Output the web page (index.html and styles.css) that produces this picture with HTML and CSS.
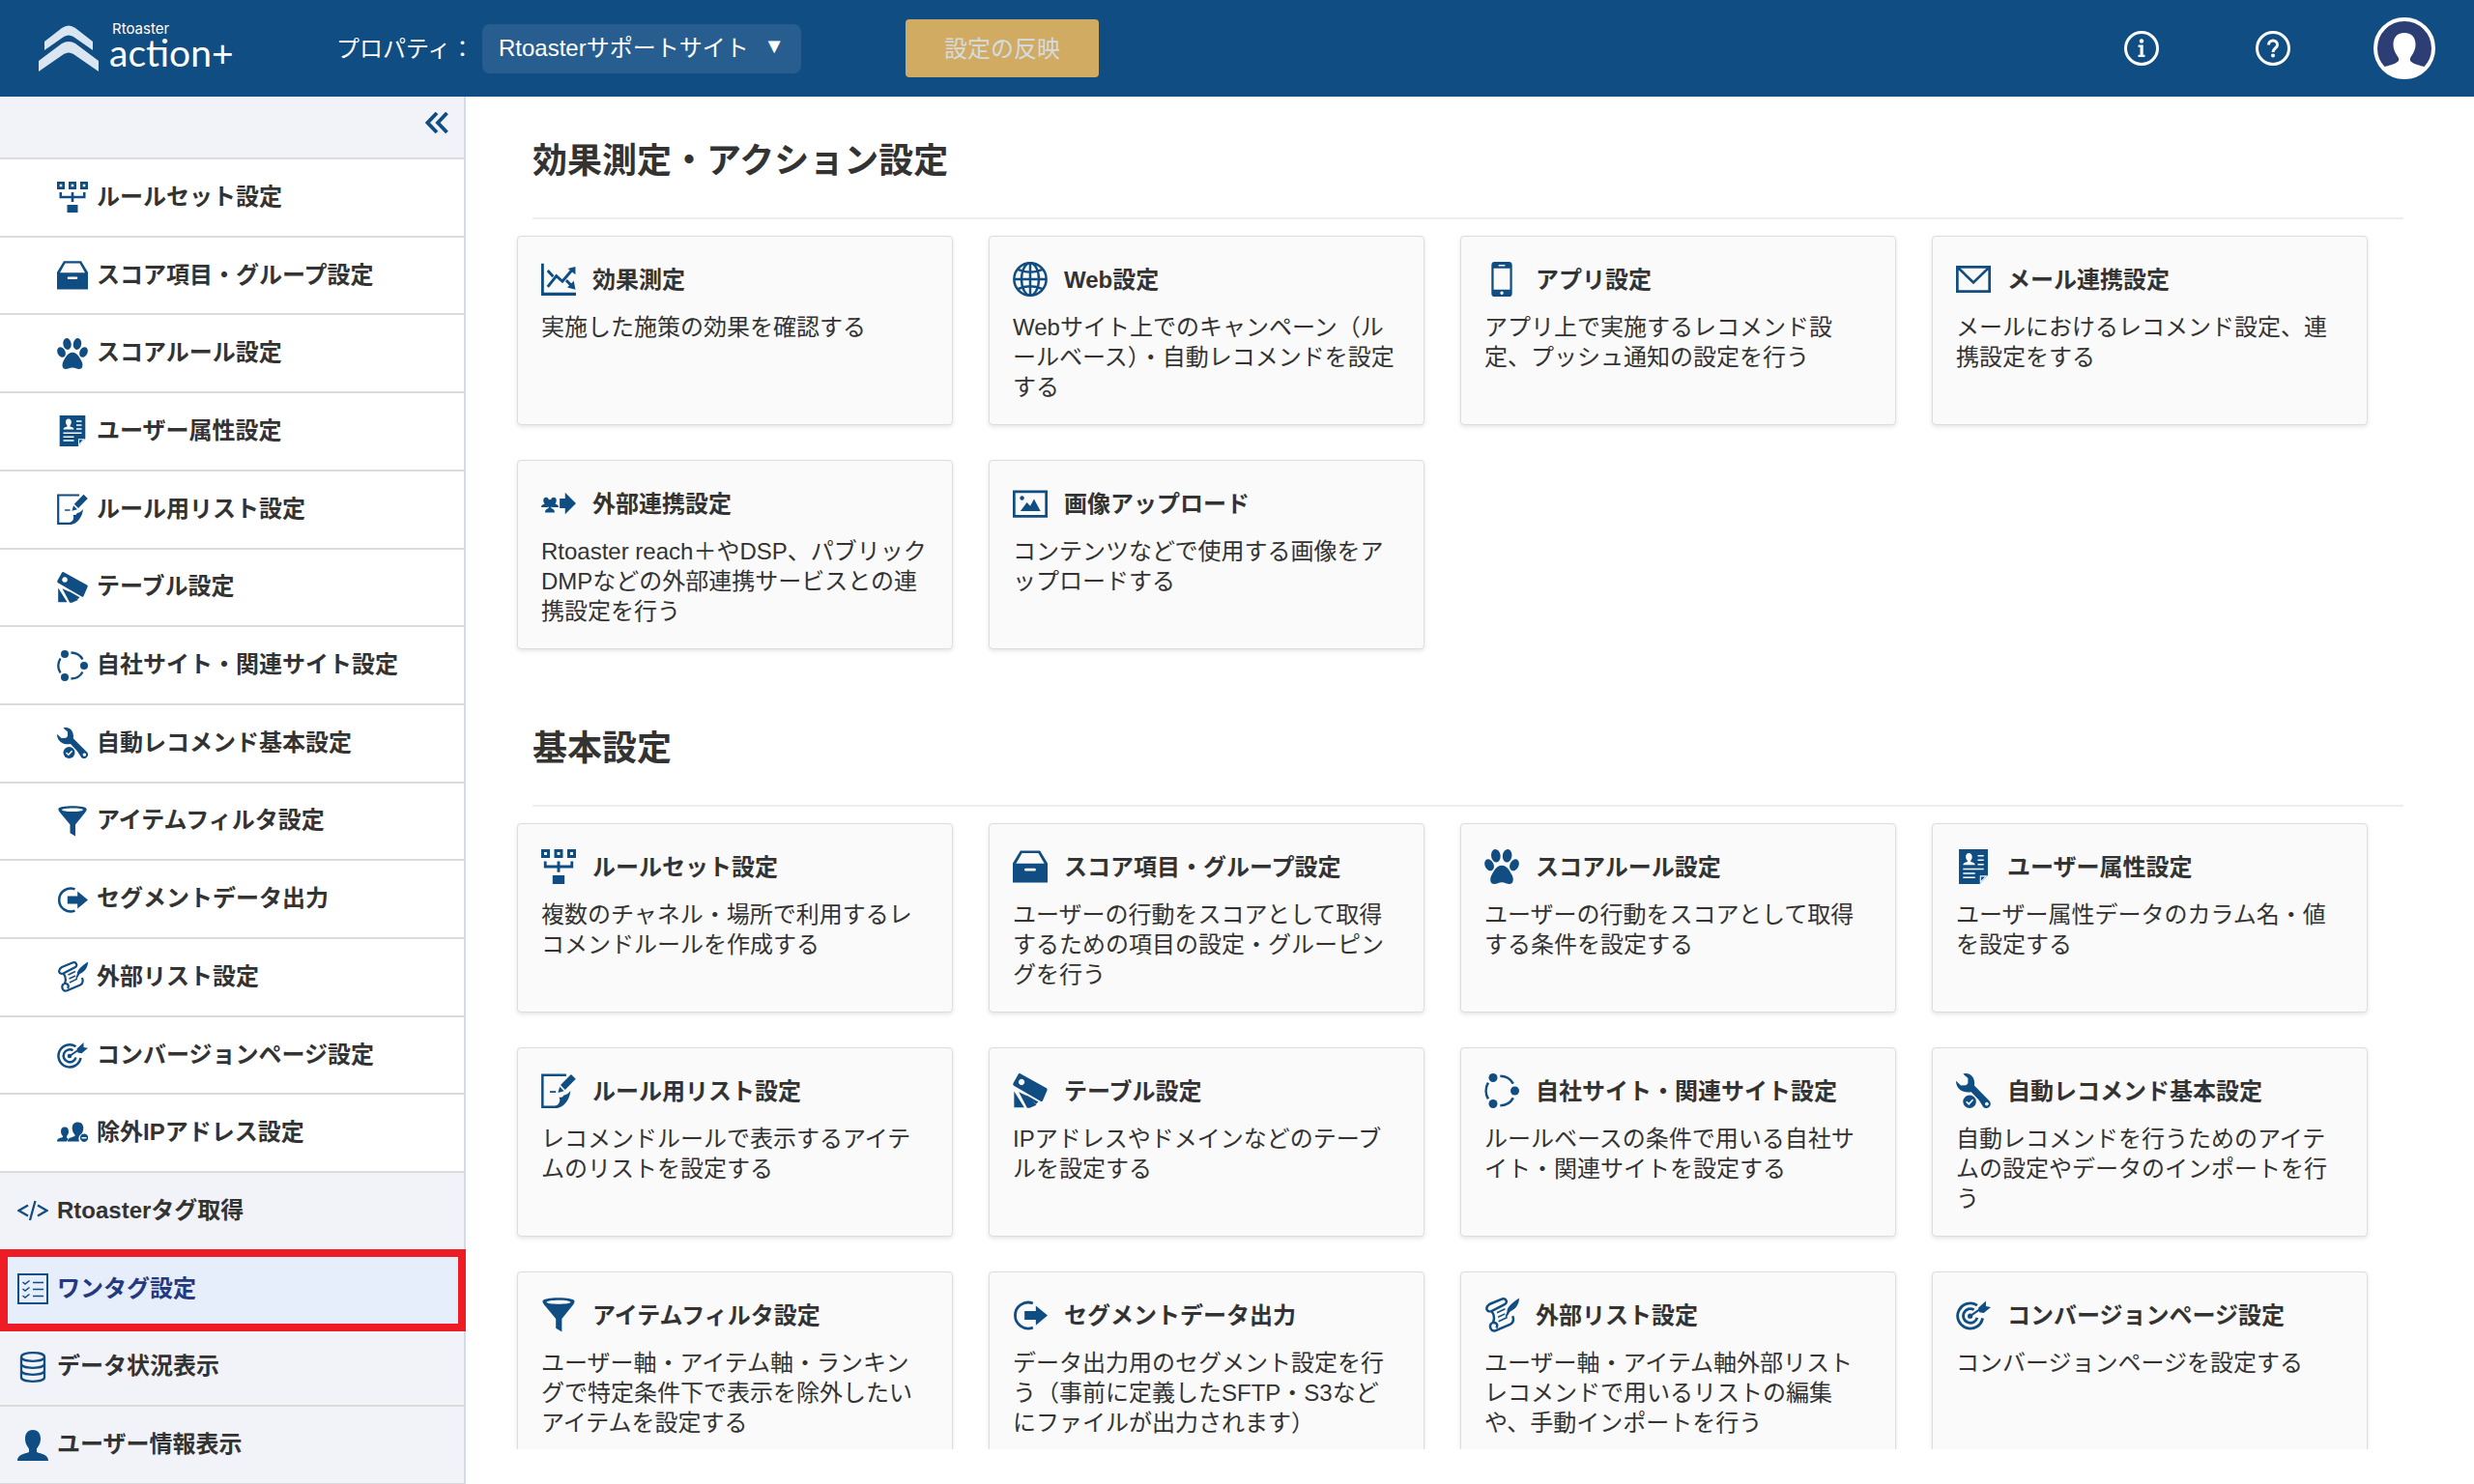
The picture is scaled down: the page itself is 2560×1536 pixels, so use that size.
FILE: index.html
```html
<!DOCTYPE html>
<html lang="ja">
<head>
  <meta charset="UTF-8" />
  <meta name="viewport" content="width=device-width, initial-scale=1" />
  <title>Rtoaster action+</title>
  <link rel="stylesheet" href="styles.css">
</head>
<body>
  <!-- icon sprite -->
  <svg class="sprite" aria-hidden="true">
    <symbol id="i-ruleset" viewBox="0 0 32 32">
      <path fill="currentColor" fill-rule="evenodd" d="M0 0h8v8H0zM2.700 2.700v2.600h2.600V2.700zM12 0h8v8h-8zM14.700 2.700v2.600h2.600V2.700zM24 0h8v8h-8zM26.700 2.700v2.600h2.600V2.700zM2.500 11h2.500v3.700h9.700V11h2.600v3.700H27V11h2.500v6.300H17.300V21h-2.600v-3.700H2.500zM10.500 24h11v8h-11z"/>
    </symbol>
    <symbol id="i-drawer" viewBox="0 0 32 32">
      <path fill="currentColor" fill-rule="evenodd" d="M7 1.300h18l7 11.500v17.800H0V12.800zM8.500 3.500L3 13.200h26L23.500 3.500zM12 17.500a1.300 1.300 0 0 0 0 2.600h8a1.300 1.300 0 0 0 0-2.600z"/>
    </symbol>
    <symbol id="i-paw" viewBox="0 0 32 32">
      <g fill="currentColor">
        <ellipse cx="10.500" cy="6" rx="4.200" ry="6" transform="rotate(-8 10.500 6)"/>
        <ellipse cx="21" cy="6" rx="4.200" ry="6" transform="rotate(8 21 6)"/>
        <ellipse cx="4.500" cy="14.500" rx="4" ry="5.600" transform="rotate(-25 4.500 14.500)"/>
        <ellipse cx="27.500" cy="14.500" rx="4" ry="5.600" transform="rotate(25 27.500 14.500)"/>
        <path d="M16 14.800c5 0 7.500 5.500 9.500 9.200 1.700 3.500 1.300 8-2.500 8-2.500 0-4-1.600-7-1.600S11.500 32 9 32c-3.800 0-4.200-4.500-2.500-8 2-3.700 4.500-9.200 9.500-9.200z"/>
      </g>
    </symbol>
    <symbol id="i-profile" viewBox="0 0 32 32">
      <path fill="currentColor" d="M2.700 0h26.600v24l-7.600 8h-19z"/>
      <path fill="#fff" d="M22 24.200h7L22 31.500z"/>
      <path fill="currentColor" d="M23 25.300h3.600L23 29.200z"/>
      <path fill="#fff" d="M11.800 3.500c2 0 3 1.500 3 3.500 0 1.600-.6 2.500-1.300 3.500v1c2 .6 4 1 4 3H6.500c0-2 2-2.400 4-3v-1C9.800 9.500 9 8.600 9 7c0-2 1-3.500 2.800-3.500z"/>
      <path stroke="#fff" stroke-width="1.500" d="M20 6h5.500M20 10h5.500M20 14h5.500M6.500 18.200h19M6.500 22.200h11M6.500 26h11"/>
    </symbol>
    <symbol id="i-edit" viewBox="0 0 32 32">
      <path fill="none" stroke="currentColor" stroke-width="2.200" d="M23 1.500H1.200V30.800H15"/>
      <path fill="currentColor" d="M13 32c6 .4 13-6 14-16-3 3-4 4-6.500 4 .5 1.600-1.500 2-4 2 1.500 3 .5 6.500-3.500 8z"/>
      <path fill="currentColor" d="M27.500.800L31.800 5 22 15l-4.200-4.300zM17 12.200l4 4-5.500 1.500zM8 16.300h5.500v1.500H8z"/>
    </symbol>
    <symbol id="i-tags" viewBox="0 0 32 32">
      <path fill="currentColor" fill-rule="evenodd" d="M6.500 0L31 13.500q1 .8.600 2L27.500 25q-.8 1.300-2 .6L.600 11Q0 10 .400 9L5 .800Q5.700-.2 6.500 0zM8 5.200a2.800 2.800 0 1 0 .1 0z"/>
      <path fill="currentColor" d="M1.200 16.500l9.300 14.800H1.200zM5.500 17.200l8.500 3.900 7.800 8-6.300 2.700h-2.300zM12.500 20l11 6.300-2.200 2z"/>
    </symbol>
    <symbol id="i-sites" viewBox="0 0 32 32">
      <g fill="currentColor"><circle cx="8" cy="4" r="4"/><circle cx="28" cy="16" r="4"/><circle cx="8" cy="28" r="4"/></g>
      <path fill="none" stroke="currentColor" stroke-width="2.300" d="M3.500 8.500C.800 13 .800 19 3.500 23.500M14.500 2.500c5.500 0 9.500 2.500 12 7M14.500 29.500c5.500 0 9.500-2.500 12-7"/>
    </symbol>
    <symbol id="i-wrench" viewBox="0 0 32 32">
      <path fill="currentColor" fill-rule="evenodd" d="M6.500.500C13-1.500 18 4 16.800 11.200L30.500 25a3.900 3.900 0 0 1-5.300 6L21 24.500 14 17C6 18.500 0 14 0 6.800L4.500 11l4.800-.2L11 9V4.500zM28.300 26.400a1.700 1.700 0 1 0 .1 0z"/>
      <circle cx="12.500" cy="26" r="6" fill="currentColor"/>
      <path fill="none" stroke="#fff" stroke-width="1.500" d="M9.500 26l2.300 2.200 3.800-4"/>
    </symbol>
    <symbol id="i-funnel" viewBox="0 0 32 32">
      <path fill="currentColor" fill-rule="evenodd" d="M16 .300c8 0 14.700 1.200 14.700 3.200 0 1.500-1 2.700-2 4L19 19.500v12l-5.500-3.300v-8.700L3.500 7.500c-1-1.300-2.200-2.500-2.200-4C1.300 1.500 8 .300 16 .300zM16 2.400c-6 0-11 .8-11 1.800S10 6 16 6s11-.8 11-1.800-5-1.800-11-1.800z"/>
    </symbol>
    <symbol id="i-export" viewBox="0 0 32 32">
      <path fill="none" stroke="currentColor" stroke-width="2.500" d="M18.500 5.300A12 12 0 1 0 18.500 27.700"/>
      <path fill="currentColor" d="M10.800 12.500h10.400V7.500L32 16.500 21.200 25.500v-5H10.800z"/>
    </symbol>
    <symbol id="i-scroll" viewBox="0 0 32 32">
      <path fill="none" stroke="currentColor" stroke-width="2.200" stroke-linejoin="round" d="M5 6L16.500 1.300c3.500-1 5 3 2.500 4.800L6.500 12.500C2 14 .2 9 5 6zM6.500 12.500C9.500 16 9.500 19 8 23M6.500 23.500c-2.500 3-.5 8.500 4 6.800L24 24.500c3-1.500 3-4.500 2-7.500M6.500 23.500c4-1.500 6.500 1 4.500 4.500"/>
      <path stroke="currentColor" stroke-width="1.400" d="M11.500 14l7.500-3.500M12.500 18l6.500-3M13 22l8-3.800"/>
      <path fill="currentColor" d="M32 .500c0 6-3.500 10.500-8.500 12.500L20.500 18l-1.300-.5L20.800 13C21 8 27 4 32 .500z"/>
    </symbol>
    <symbol id="i-target" viewBox="0 0 32 32">
      <g fill="none" stroke="currentColor">
        <path stroke-width="2.500" d="M19.500 7.200A11.600 11.600 0 1 0 24.500 19"/>
        <path stroke-width="2.500" d="M16.500 11.200A6.500 6.500 0 1 0 19.500 18.500"/>
        <path stroke-width="1.800" d="M13 17l11-7.500"/>
      </g>
      <circle cx="13" cy="17" r="2.300" fill="currentColor"/>
      <path fill="currentColor" d="M20.500 9.500L27.500 3v5l4.500.800-6.500 5.400-4-.7z"/>
    </symbol>
    <symbol id="i-users-minus" viewBox="0 0 32 32">
      <path fill="currentColor" d="M8 9.500c2.800 0 4 2 4 4.500s-1 3.500-2 5v1.500l1.500 1L10 24.500H0c0-3 2-3.200 6-4.500v-1c-1-1.500-2-2.500-2-5s1.200-4.500 4-4.500z"/>
      <path fill="currentColor" d="M21.500 4.500c4 0 5.800 2.800 5.800 6 0 2.500-.8 4.500-2 6a6 6 0 0 0-2.300 8H11c0-3.500 2.500-3.700 7.500-5.500v-1.500C17 16 15.700 14 15.700 10.500s1.800-6 5.800-6z"/>
      <path fill="currentColor" fill-rule="evenodd" d="M28 16.500a4.200 4.200 0 1 0 .1 0zM25.500 20h5v1.500h-5z"/>
    </symbol>
    <symbol id="i-code" viewBox="0 0 32 32">
      <path fill="none" stroke="currentColor" stroke-width="2.300" d="M11 10.500L1.500 16l9.500 5.500M21 10.500l9.500 5.500-9.500 5.500M18.500 6l-5.500 20"/>
    </symbol>
    <symbol id="i-checklist" viewBox="0 0 32 32">
      <path fill="none" stroke="currentColor" stroke-width="2" d="M1 1h30v30H1z"/>
      <path fill="none" stroke="currentColor" stroke-width="1.500" d="M5.500 9l2.500 2 4.500-3.500M5.500 16L8 18l4.500-3.500M5.500 23L8 25l4.500-3.500M16 9.500h11M16 16.500h11M16 23.500h11"/>
    </symbol>
    <symbol id="i-database" viewBox="0 0 32 32">
      <path fill="none" stroke="currentColor" stroke-width="2.300" d="M4 5.500c0-2.500 5-4.300 12-4.300s12 1.800 12 4.300-5 4.300-12 4.300S4 8 4 5.500zV26.500c0 2.500 5 4.300 12 4.300s12-1.800 12-4.300V5.500M4 12.500c0 2.500 5 4.300 12 4.300s12-1.800 12-4.300M4 19.500c0 2.500 5 4.300 12 4.300s12-1.800 12-4.300"/>
    </symbol>
    <symbol id="i-user" viewBox="0 0 32 32">
      <path fill="currentColor" d="M16 0c5.500 0 8 4 8 9 0 5-2 7.500-4 10.500V23c5 2 12 2.500 12 9H0c0-6.500 7-7 12-9v-3.500C10 16.500 8 14 8 9c0-5 2.500-9 8-9z"/>
    </symbol>
    <symbol id="i-chart" viewBox="0 0 32 32">
      <path fill="currentColor" d="M0 1.500h2.500v26.700H32V31H0z"/>
      <path fill="none" stroke="currentColor" stroke-width="2.600" d="M6 23l8-10 5.500 5L28 8M6 8l5 5.500M23 17l5 5"/>
      <path fill="currentColor" d="M31.500 4.500v7.200l-7-5.500zM31.500 25.500l-7.500-2 6-6z"/>
    </symbol>
    <symbol id="i-globe" viewBox="0 0 32 32">
      <g fill="none" stroke="currentColor" stroke-width="2.200">
        <circle cx="16" cy="16" r="14.800"/>
        <ellipse cx="16" cy="16" rx="8" ry="14.800"/>
        <path d="M16 1v30M1 16h30M4.500 7q11.500 5 23 0M4.500 25q11.500-5 23 0"/>
      </g>
    </symbol>
    <symbol id="i-phone" viewBox="0 0 32 32">
      <path fill="currentColor" fill-rule="evenodd" d="M9.500 0h13q3 0 3 3v26q0 3-3 3h-13q-3 0-3-3V3q0-3 3-3zM8.500 6v19.500h15V6zM13 2.700V4h6V2.700zM16 27.200a1.500 1.500 0 1 0 .1 0z"/>
    </symbol>
    <symbol id="i-mail" viewBox="0 0 32 32">
      <path fill="none" stroke="currentColor" stroke-width="2.400" d="M1.200 4.800h29.600v22.400H1.200zL16 19 30.800 4.800"/>
    </symbol>
    <symbol id="i-transfer" viewBox="0 0 32 32">
      <path fill="currentColor" d="M17 11.500h5V6L32 16 22 26v-5.500h-5z"/>
      <path fill="currentColor" d="M4.500 10.500c1.700 0 2.500 1.200 2.500 2.700l-1 3 1.500 1.300-1.500 2H0c0-2 1.500-2.200 3.300-3C2.500 15.500 2 14.700 2 13.200s.8-2.700 2.500-2.700zM11.500 10.500c1.700 0 2.500 1.200 2.500 2.700s-.5 2.300-1.200 3.300c1.800.8 3.200 1 3.200 3h-6l-1.500-2 1.500-1.300-1-3c0-1.500.8-2.700 2.500-2.700zM8 12.500c1.700 0 2.500 1.400 2.500 3 0 2-.7 2.700-1.300 3.500v1.500c1.800.8 3.200 1.200 3.200 4H3.600c0-2.800 1.400-3.200 3.200-4V19c-.6-.8-1.300-1.500-1.300-3.500 0-1.600.8-3 2.500-3z"/>
    </symbol>
    <symbol id="i-image" viewBox="0 0 32 32">
      <path fill="none" stroke="currentColor" stroke-width="2.400" d="M1.200 5.200h29.600v22.600H1.200z"/>
      <circle cx="8.500" cy="11" r="2" fill="currentColor"/>
      <path fill="currentColor" d="M7 23l6-8 3 3.500L19.500 12 25.500 23z"/>
    </symbol>
  </svg>

  <header class="header">
    <a class="logo" href="#">
      <svg class="logo-mark" viewBox="0 0 62 48" aria-hidden="true">
        <path fill="#d9e6f2" d="M6 17L24 3q7-5 14 0l18 14v9L36 12q-5-3-10 0L6 26z"/>
        <path fill="#d9e6f2" d="M0 37L24 19q7-4 14 0l24 18v11L36 30q-5-3-10 0L0 48z"/>
      </svg>
      <span class="logo-text">
        <span class="logo-sub">Rtoaster</span>
        <span class="logo-name">action+</span>
      </span>
    </a>
    <label class="property-label" for="property">プロパティ：</label>
    <div class="property">
      <select id="property">
        <option>Rtoasterサポートサイト</option>
      </select>
      <span class="property-arrow" aria-hidden="true">▼</span>
    </div>
    <button class="apply" type="button">設定の反映</button>
    <div class="header-tools">
      <button type="button" aria-label="お知らせ">
        <svg class="tool-icon" viewBox="0 0 36 36">
          <circle cx="18" cy="18" r="16.500" fill="none" stroke="#fff" stroke-width="3"/>
          <circle cx="18" cy="10.500" r="2.200" fill="#fff"/>
          <path fill="#fff" d="M14.500 14.500h5.200v10.300h1.800V27h-7v-2.200h2v-8h-2z"/>
        </svg>
      </button>
      <button type="button" aria-label="ヘルプ">
        <svg class="tool-icon" viewBox="0 0 36 36">
          <circle cx="18" cy="18" r="16.500" fill="none" stroke="#fff" stroke-width="3"/>
          <path fill="none" stroke="#fff" stroke-width="3" d="M13.500 14.500c0-6 9-6 9 0 0 3.500-4.500 3.500-4.500 7.500"/>
          <circle cx="18" cy="25.500" r="2" fill="#fff"/>
        </svg>
      </button>
      <button type="button" aria-label="アカウント">
        <svg class="avatar" viewBox="0 0 64 64">
          <circle cx="32" cy="32" r="30" fill="#2d3e74" stroke="#fff" stroke-width="4"/>
          <path fill="#fff" d="M32 16c8 0 11.500 5 11.500 12 0 6-3 10-5.500 14v3c4 4 10 4.500 15.500 6.500Q45 62 32 62T10.500 51.500C16 49.500 22 49 26 45v-3c-2.500-4-5.500-8-5.500-14 0-7 3.500-12 11.500-12z"/>
        </svg>
      </button>
    </div>
  </header>

  <div class="layout">
    <nav class="sidebar">
      <div class="sidebar-top">
        <button class="collapse" type="button" aria-label="メニューを閉じる">
          <svg viewBox="0 0 24 22"><path fill="none" stroke="currentColor" stroke-width="3.800" d="M12 1L2.500 11 12 21M22.500 1L13 11l9.500 10"/></svg>
        </button>
      </div>
      <ul class="menu">
        <li class="sub"><a href="#"><svg class="icon"><use href="#i-ruleset"/></svg><span>ルールセット設定</span></a></li>
        <li class="sub"><a href="#"><svg class="icon"><use href="#i-drawer"/></svg><span>スコア項目・グループ設定</span></a></li>
        <li class="sub"><a href="#"><svg class="icon"><use href="#i-paw"/></svg><span>スコアルール設定</span></a></li>
        <li class="sub"><a href="#"><svg class="icon"><use href="#i-profile"/></svg><span>ユーザー属性設定</span></a></li>
        <li class="sub"><a href="#"><svg class="icon"><use href="#i-edit"/></svg><span>ルール用リスト設定</span></a></li>
        <li class="sub"><a href="#"><svg class="icon"><use href="#i-tags"/></svg><span>テーブル設定</span></a></li>
        <li class="sub"><a href="#"><svg class="icon"><use href="#i-sites"/></svg><span>自社サイト・関連サイト設定</span></a></li>
        <li class="sub"><a href="#"><svg class="icon"><use href="#i-wrench"/></svg><span>自動レコメンド基本設定</span></a></li>
        <li class="sub"><a href="#"><svg class="icon"><use href="#i-funnel"/></svg><span>アイテムフィルタ設定</span></a></li>
        <li class="sub"><a href="#"><svg class="icon"><use href="#i-export"/></svg><span>セグメントデータ出力</span></a></li>
        <li class="sub"><a href="#"><svg class="icon"><use href="#i-scroll"/></svg><span>外部リスト設定</span></a></li>
        <li class="sub"><a href="#"><svg class="icon"><use href="#i-target"/></svg><span>コンバージョンページ設定</span></a></li>
        <li class="sub"><a href="#"><svg class="icon"><use href="#i-users-minus"/></svg><span>除外IPアドレス設定</span></a></li>
        <li><a href="#"><svg class="icon"><use href="#i-code"/></svg><span>Rtoasterタグ取得</span></a></li>
        <li class="active"><a href="#"><svg class="icon"><use href="#i-checklist"/></svg><span>ワンタグ設定</span></a></li>
        <li><a href="#"><svg class="icon"><use href="#i-database"/></svg><span>データ状況表示</span></a></li>
        <li><a href="#"><svg class="icon"><use href="#i-user"/></svg><span>ユーザー情報表示</span></a></li>
      </ul>
    </nav>

    <main class="main">
      <section class="section">
        <h2>効果測定・アクション設定</h2>
        <div class="cards">
          <a class="card" href="#">
            <h3><svg class="icon"><use href="#i-chart"/></svg><span>効果測定</span></h3>
            <p>実施した施策の効果を確認する</p>
          </a>
          <a class="card" href="#">
            <h3><svg class="icon"><use href="#i-globe"/></svg><span>Web設定</span></h3>
            <p>Webサイト上でのキャンペーン（ルールベース）・自動レコメンドを設定する</p>
          </a>
          <a class="card" href="#">
            <h3><svg class="icon"><use href="#i-phone"/></svg><span>アプリ設定</span></h3>
            <p>アプリ上で実施するレコメンド設定、プッシュ通知の設定を行う</p>
          </a>
          <a class="card" href="#">
            <h3><svg class="icon"><use href="#i-mail"/></svg><span>メール連携設定</span></h3>
            <p>メールにおけるレコメンド設定、連携設定をする</p>
          </a>
          <a class="card" href="#">
            <h3><svg class="icon"><use href="#i-transfer"/></svg><span>外部連携設定</span></h3>
            <p>Rtoaster reach＋やDSP、パブリックDMPなどの外部連携サービスとの連携設定を行う</p>
          </a>
          <a class="card" href="#">
            <h3><svg class="icon"><use href="#i-image"/></svg><span>画像アップロード</span></h3>
            <p>コンテンツなどで使用する画像をアップロードする</p>
          </a>
        </div>
      </section>

      <section class="section">
        <h2>基本設定</h2>
        <div class="cards">
          <a class="card" href="#">
            <h3><svg class="icon"><use href="#i-ruleset"/></svg><span>ルールセット設定</span></h3>
            <p>複数のチャネル・場所で利用するレコメンドルールを作成する</p>
          </a>
          <a class="card" href="#">
            <h3><svg class="icon"><use href="#i-drawer"/></svg><span>スコア項目・グループ設定</span></h3>
            <p>ユーザーの行動をスコアとして取得するための項目の設定・グルーピングを行う</p>
          </a>
          <a class="card" href="#">
            <h3><svg class="icon"><use href="#i-paw"/></svg><span>スコアルール設定</span></h3>
            <p>ユーザーの行動をスコアとして取得する条件を設定する</p>
          </a>
          <a class="card" href="#">
            <h3><svg class="icon"><use href="#i-profile"/></svg><span>ユーザー属性設定</span></h3>
            <p>ユーザー属性データのカラム名・値を設定する</p>
          </a>
          <a class="card" href="#">
            <h3><svg class="icon"><use href="#i-edit"/></svg><span>ルール用リスト設定</span></h3>
            <p>レコメンドルールで表示するアイテムのリストを設定する</p>
          </a>
          <a class="card" href="#">
            <h3><svg class="icon"><use href="#i-tags"/></svg><span>テーブル設定</span></h3>
            <p>IPアドレスやドメインなどのテーブルを設定する</p>
          </a>
          <a class="card" href="#">
            <h3><svg class="icon"><use href="#i-sites"/></svg><span>自社サイト・関連サイト設定</span></h3>
            <p>ルールベースの条件で用いる自社サイト・関連サイトを設定する</p>
          </a>
          <a class="card" href="#">
            <h3><svg class="icon"><use href="#i-wrench"/></svg><span>自動レコメンド基本設定</span></h3>
            <p>自動レコメンドを行うためのアイテムの設定やデータのインポートを行う</p>
          </a>
          <a class="card" href="#">
            <h3><svg class="icon"><use href="#i-funnel"/></svg><span>アイテムフィルタ設定</span></h3>
            <p>ユーザー軸・アイテム軸・ランキングで特定条件下で表示を除外したいアイテムを設定する</p>
          </a>
          <a class="card" href="#">
            <h3><svg class="icon"><use href="#i-export"/></svg><span>セグメントデータ出力</span></h3>
            <p>データ出力用のセグメント設定を行う（事前に定義したSFTP・S3などにファイルが出力されます）</p>
          </a>
          <a class="card" href="#">
            <h3><svg class="icon"><use href="#i-scroll"/></svg><span>外部リスト設定</span></h3>
            <p>ユーザー軸・アイテム軸外部リストレコメンドで用いるリストの編集や、手動インポートを行う</p>
          </a>
          <a class="card" href="#">
            <h3><svg class="icon"><use href="#i-target"/></svg><span>コンバージョンページ設定</span></h3>
            <p>コンバージョンページを設定する</p>
          </a>
        </div>
      </section>
    </main>
  </div>
</body>
</html>
```
FILE: styles.css
```css
* {
  box-sizing: border-box;
}
body {
  margin: 0;
  height: 100vh;
  display: flex;
  flex-direction: column;
  overflow: hidden;
  font-family: "Liberation Sans", "Noto Sans CJK JP", sans-serif;
  font-size: 24px;
  color: #333;
  background: #fff;
}
a {
  color: inherit;
  text-decoration: none;
}
button {
  padding: 0;
  border: none;
  background: none;
  font: inherit;
  cursor: pointer;
}
.sprite {
  display: none;
}
.icon {
  flex: none;
  width: 32px;
  height: 32px;
  color: #104d82;
}

/* header */
.header {
  flex: none;
  display: flex;
  align-items: center;
  height: 100px;
  padding: 0 40px;
  background: #104d82;
  color: #fff;
}
.logo {
  display: flex;
  align-items: center;
  gap: 11px;
  width: 308px;
}
.logo-mark {
  width: 62px;
  height: 48px;
}
.logo-text {
  display: flex;
  flex-direction: column;
  padding-bottom: 8px;
}
.logo-sub {
  padding-left: 3px;
  font-family: Inter, sans-serif;
  font-size: 15px;
  line-height: 16px;
}
.logo-name {
  font-family: Lato, sans-serif;
  font-size: 39px;
  line-height: 32px;
}
.property-label {
  width: 151px;
  padding-bottom: 4px;
}
.property {
  position: relative;
}
.property select {
  appearance: none;
  height: 51px;
  padding: 0 54px 2px 17px;
  border: none;
  border-radius: 8px;
  background: #285e8f;
  color: #fff;
  font: inherit;
}
.property-arrow {
  position: absolute;
  top: 7px;
  right: 17px;
  font-size: 22px;
  line-height: 32px;
  pointer-events: none;
}
.apply {
  width: 200px;
  height: 60px;
  margin-left: 108px;
  padding-bottom: 4px;
  border-radius: 4px;
  background: #d0ab61;
  color: #d5dbe0;
}
.header-tools {
  display: flex;
  gap: 72px;
  margin-left: auto;
}
.header-tools button {
  display: flex;
  align-items: center;
  justify-content: center;
  width: 64px;
  height: 64px;
}
.tool-icon {
  width: 36px;
  height: 36px;
}
.avatar {
  width: 64px;
  height: 64px;
}

/* sidebar */
.layout {
  flex: 1;
  min-height: 0;
  display: flex;
}
.sidebar {
  flex: none;
  display: flex;
  flex-direction: column;
  width: 482px;
  border-right: 2px solid #d3daea;
  background: #f2f3f8;
}
.sidebar-top {
  display: flex;
  justify-content: flex-end;
  height: 63px;
  padding: 16px 16px 0 0;
}
.collapse {
  width: 24px;
  height: 22px;
  color: #104d82;
}
.collapse svg {
  display: block;
}
.menu {
  flex: 1;
  display: flex;
  flex-direction: column;
  margin: 0;
  padding: 0;
  border-bottom: 1px solid #dbdbdb;
  list-style: none;
}
.menu li {
  flex: 1;
  position: relative;
  border-top: 2px solid #dbdbdb;
}
.menu a {
  display: flex;
  align-items: center;
  gap: 9px;
  height: 100%;
  padding-left: 18px;
  font-weight: bold;
}
.menu span {
  padding-bottom: 6px;
}
.menu .sub {
  background: #fff;
}
.menu .sub a {
  padding-left: 59px;
}
.menu .active {
  background: #e6edfb;
  color: #24397f;
}
.menu .active::after {
  content: "";
  position: absolute;
  inset: -2px -2px -4px 0;
  border: 8px solid #ee1c25;
  z-index: 1;
}

/* main */
.main {
  flex: 1;
  margin-bottom: 36px;
  padding: 0 73px 0 53px;
  overflow: hidden;
}
.section {
  margin-bottom: 36px;
}
.section h2 {
  margin: 0 0 17px 16px;
  padding: 43px 0 34px;
  border-bottom: 2px solid #eee;
  font-size: 36px;
  line-height: 48px;
}
.cards {
  display: grid;
  grid-template-columns: repeat(4, 1fr);
  gap: 36px 37px;
  padding-right: 37px;
}
.card {
  min-height: 196px;
  padding: 24px 24px 16px;
  border: 1px solid #ddd;
  border-radius: 4px;
  background: #fafafa;
  box-shadow: 0 2px 4px rgba(0, 0, 0, 0.1);
}
.card h3 {
  display: flex;
  align-items: center;
  gap: 17px;
  height: 40px;
  margin: 0 0 14px;
  font-size: 24px;
}
.card h3 span {
  padding-bottom: 4px;
}
.card .icon {
  width: 36px;
  height: 36px;
}
.card p {
  margin: 0;
  line-height: 31px;
}
```
